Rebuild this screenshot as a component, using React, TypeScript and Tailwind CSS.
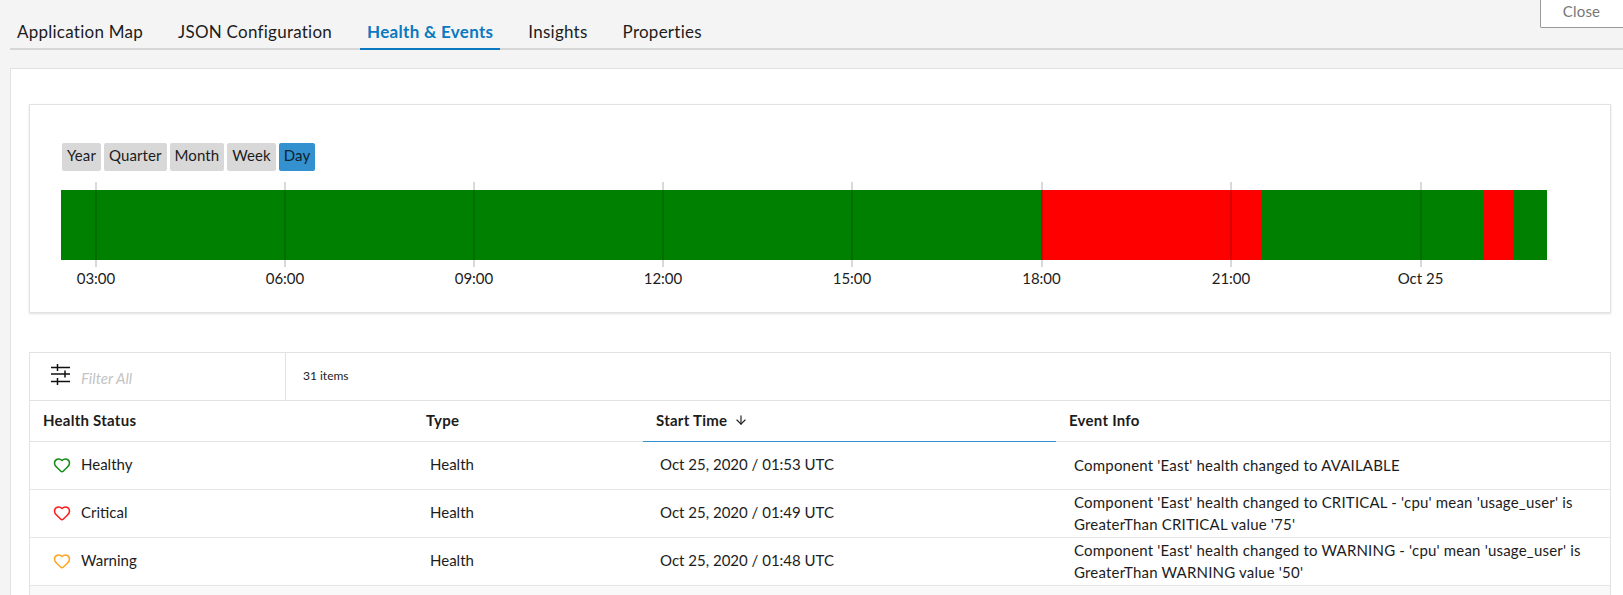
import { Heart, ArrowDown } from 'lucide-react'

const tabs = [
  { label: 'Application Map' },
  { label: 'JSON Configuration' },
  { label: 'Health & Events', active: true },
  { label: 'Insights' },
  { label: 'Properties' },
]

const ranges = ['Year', 'Quarter', 'Month', 'Week', 'Day']

// bar runs 61 -> 1547, widths in px
const segments = [
  { color: 'bg-[#008000]', w: 980.5 },
  { color: 'bg-[#ff0000]', w: 220.5 },
  { color: 'bg-[#008000]', w: 221.5 },
  { color: 'bg-[#ff0000]', w: 30.5 },
  { color: 'bg-[#008000]', w: 33 },
]

const ticks = [
  { label: '03:00', x: 35 },
  { label: '06:00', x: 224 },
  { label: '09:00', x: 413 },
  { label: '12:00', x: 602 },
  { label: '15:00', x: 791 },
  { label: '18:00', x: 980.5 },
  { label: '21:00', x: 1170 },
  { label: 'Oct 25', x: 1359.5 },
]

const rows = [
  {
    status: 'Healthy',
    color: '#138a13',
    time: 'Oct 25, 2020 / 01:53 UTC',
    info: "Component 'East' health changed to AVAILABLE",
  },
  {
    status: 'Critical',
    color: '#ff1a1a',
    time: 'Oct 25, 2020 / 01:49 UTC',
    info: "Component 'East' health changed to CRITICAL - 'cpu' mean 'usage_user' is GreaterThan CRITICAL value '75'",
  },
  {
    status: 'Warning',
    color: '#ffa51f',
    time: 'Oct 25, 2020 / 01:48 UTC',
    info: "Component 'East' health changed to WARNING - 'cpu' mean 'usage_user' is GreaterThan WARNING value '50'",
  },
]

const columns = 'grid grid-cols-[396px_217px_413px_1fr]'

function FilterIcon() {
  return (
    <svg width="20" height="22" viewBox="0 0 20 22" stroke="#111" strokeWidth="1.5" fill="none">
      <path d="M0 4.5h19M0 11h19M0 18.5h19" />
      <path d="M6.5 1v7M14 7.5v7M6.5 15v7" />
    </svg>
  )
}

export default function App() {
  return (
    <div className="h-[595px] w-[1623px] overflow-hidden bg-[#f4f4f4] font-['Lato',sans-serif] text-[#1c1c1c]">
      {/* Tabs */}
      <div className="ml-[10px] flex h-[50px] justify-between border-b-[2px] border-[#d6d6d6]">
        <div className="flex h-[50px] items-end gap-[21px]">
          {tabs.map((t) => (
            <div
              key={t.label}
              className={
                t.active
                  ? 'flex h-[31px] items-start border-b-[2px] border-[#0a79bf] px-[7px] text-[17px] font-bold tracking-[0.3px] text-[#0a79bf]'
                  : 'flex h-[31px] items-start px-[7px] text-[17px] tracking-[0.25px]'
              }
            >
              {t.label}
            </div>
          ))}
        </div>
        <button className="h-[28px] w-[83px] rounded-bl-[2px] border-b border-l border-[#999] bg-white pb-[4px] pr-[1px] text-[15px] tracking-[0.2px] text-[#777]">
          Close
        </button>
      </div>

      {/* Panel */}
      <div className="ml-[10px] mt-[18px] h-[600px] border border-r-0 border-[#e2e2e2] bg-white pl-[18px] pr-[12px] pt-[35px]">
        {/* Timeline card */}
        <div className="h-[209px] border border-[#e2e2e2] pl-[31px] pt-[38px] shadow-[0_1px_2px_rgba(0,0,0,0.12)]">
          <div className="flex gap-[3px] pl-[1px]">
            {ranges.map((r) => (
              <button
                key={r}
                className={
                  r === 'Day'
                    ? 'h-[28px] rounded-[2px] bg-[#3391cf] px-[5px] pb-[3px] text-[15px] tracking-[0.1px] text-[#10202c]'
                    : 'h-[28px] rounded-[2px] bg-[#d8d8d8] px-[5px] pb-[3px] text-[15px] tracking-[0.1px] text-[#1c1c1c]'
                }
              >
                {r}
              </button>
            ))}
          </div>
          <div className="relative mt-[19px] h-[70px] w-[1486px]">
            <div className="flex h-full">
              {segments.map((s, i) => (
                <div key={i} className={s.color} style={{ width: s.w }} />
              ))}
            </div>
            {ticks.map((t) => (
              <div key={t.label} className="absolute top-[-8px] h-[85px] w-0" style={{ left: t.x }}>
                <div className="h-full w-[2px] -translate-x-[1px] bg-black/15" />
                <div className="absolute top-[96px] left-0 -translate-x-1/2 -translate-y-1/2 whitespace-nowrap text-[15px]">
                  {t.label}
                </div>
              </div>
            ))}
          </div>
        </div>

        {/* Events table */}
        <div className="mt-[39px] border border-[#e2e2e2]">
          <div className="flex h-[48px] border-b border-[#e2e2e2]">
            <div className="flex w-[256px] border-r border-[#e2e2e2] pl-[21px] pt-[10px]">
              <FilterIcon />
              <span className="ml-[10px] pt-[4px] text-[15px] italic text-[#c4c4c4]">Filter All</span>
            </div>
            <div className="pl-[17px] pt-[15px] text-[12px] leading-[16px]">31 items</div>
          </div>
          <div className={`${columns} h-[41px] border-b border-[#e2e2e2] text-[15px] font-bold tracking-[0.25px]`}>
            <div className="pl-[13px] pt-[8px]">Health Status</div>
            <div className="pt-[8px]">Type</div>
            <div className="relative flex items-start gap-[7px] pl-[13px] pt-[8px]">
              Start Time
              <ArrowDown size={14} strokeWidth={2} className="mt-[4px]" />
              <div className="absolute bottom-[-1px] left-0 right-0 h-[1px] bg-[#3391cf]" />
            </div>
            <div className="pl-[13px] pt-[8px]">Event Info</div>
          </div>
          {rows.map((r) => (
            <div key={r.status} className={`${columns} h-[48px] border-b border-[#e6e6e6] text-[15px]`}>
              <div className="flex items-center pb-[2px] pl-[23px]">
                <Heart size={18} color={r.color} strokeWidth={2} />
                <span className="ml-[10px]">{r.status}</span>
              </div>
              <div className="flex items-center pb-[2px] pl-[4px]">Health</div>
              <div className="flex items-center pb-[2px] pl-[17px]">{r.time}</div>
              <div className="flex items-center pb-[2px] pl-[18px] pr-[20px] leading-[22px] tracking-[0.19px]">{r.info}</div>
            </div>
          ))}
          <div className="h-[40px] bg-[#f9f9f9]" />
        </div>
      </div>
    </div>
  )
}
